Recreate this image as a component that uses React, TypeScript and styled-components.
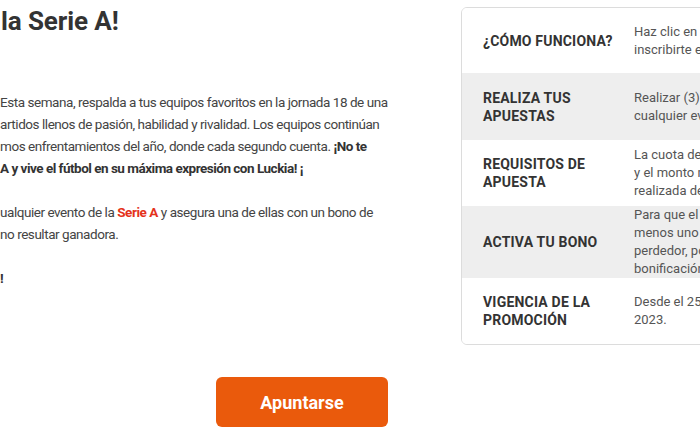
import React from "react";
import styled, { createGlobalStyle } from "styled-components";

const Global = createGlobalStyle`
  html, body { margin: 0; padding: 0; background: #ffffff; }
  body { font-family: Roboto, "Liberation Sans", sans-serif; }
`;

const Viewport = styled.div`
  width: 700px;
  height: 436px;
  overflow: hidden;
  background: #fff;
  display: flex;
  flex-direction: column;
`;

const Top = styled.div`
  display: flex;
  align-items: flex-start;
`;

const LeftCol = styled.div`
  width: 400px;
  flex-shrink: 0;
  padding-top: 5px;
  color: #444;
  font-size: 13.5px;
  letter-spacing: -0.45px;
  line-height: 22px;
`;

const Title = styled.h1`
  margin: 0 0 54px;
  padding-left: 1px;
  font-size: 26px;
  line-height: 32px;
  letter-spacing: -0.1px;
  font-weight: 700;
  color: #333;
  white-space: nowrap;
`;

const Para = styled.p`
  margin: 0 0 22px;
  white-space: nowrap;
`;

const Strong = styled.strong`
  font-weight: 700;
  color: #333;
  letter-spacing: -0.5px;
`;

const Red = styled.strong`
  font-weight: 700;
  color: #e4321b;
`;

const Card = styled.div`
  margin-left: 61px;
  margin-top: 7px;
  width: 330px;
  flex-shrink: 0;
  border: 1px solid #dcdcdc;
  border-radius: 6px;
  overflow: hidden;
  background: #fff;
`;

const Row = styled.div<{ $shade?: boolean; $h: number }>`
  display: flex;
  align-items: center;
  min-height: ${(p) => p.$h}px;
  background: ${(p) => (p.$shade ? "#eeeeee" : "#ffffff")};
`;

const Label = styled.div`
  width: 131px;
  flex-shrink: 0;
  padding: 0 20px 0 21px;
  font-size: 14px;
  letter-spacing: 0.2px;
  line-height: 18px;
  font-weight: 700;
  color: #333;
  text-transform: uppercase;
`;

const Value = styled.div`
  font-size: 13px;
  line-height: 18px;
  color: #555;
  white-space: nowrap;
`;

const ButtonRow = styled.div`
  display: flex;
  padding-left: 216px;
  margin-top: 32px;
`;

const Button = styled.button`
  width: 172px;
  height: 50px;
  border: none;
  border-radius: 6px;
  background: #ea5a0c;
  color: #fff;
  font-family: Roboto, "Liberation Sans", sans-serif;
  font-size: 18px;
  font-weight: 700;
  cursor: pointer;
`;

const rows = [
  { label: "¿Cómo funciona?", h: 65, lines: ["Haz clic en el botón “Apuntarse” para", "inscribirte en la promoción."] },
  { label: "Realiza tus apuestas", h: 67, shade: true, lines: ["Realizar (3) apuestas de 25 MXN o más en", "cualquier evento de la Serie A."] },
  { label: "Requisitos de apuesta", h: 66, lines: ["La cuota de cada apuesta debe ser de 1.50", "y el monto mínimo de 25 MXN, y debe ser", "realizada de forma individual."] },
  { label: "Activa tu bono", h: 72, shade: true, lines: ["Para que el bono se active, al", "menos uno de tus pronósticos debe ser", "perdedor, por lo que recibirás tu", "bonificación en tu cuenta."] },
  { label: "Vigencia de la promoción", h: 66, lines: ["Desde el 25 de diciembre al 31 de diciembre de", "2023."] },
];

export default function App() {
  return (
    <>
      <Global />
      <Viewport>
        <Top>
          <LeftCol>
            <Title>la Serie A!</Title>
            <Para>
              Esta semana, respalda a tus equipos favoritos en la jornada 18 de una
              <br />
              artidos llenos de pasión, habilidad y rivalidad. Los equipos continúan
              <br />
              mos enfrentamientos del año, donde cada segundo cuenta. <Strong>¡No te</Strong>
              <br />
              <Strong>A y vive el fútbol en su máxima expresión con Luckia! ¡</Strong>
            </Para>
            <Para>
              ualquier evento de la <Red>Serie A</Red> y asegura una de ellas con un bono de
              <br />
              no resultar ganadora.
            </Para>
            <Para>
              <Strong>!</Strong>
            </Para>
          </LeftCol>
          <Card>
            {rows.map((r) => (
              <Row key={r.label} $shade={r.shade} $h={r.h}>
                <Label>{r.label}</Label>
                <Value>
                  {r.lines.map((l, i) => (
                    <React.Fragment key={i}>
                      {i > 0 && <br />}
                      {l}
                    </React.Fragment>
                  ))}
                </Value>
              </Row>
            ))}
          </Card>
        </Top>
        <ButtonRow>
          <Button>Apuntarse</Button>
        </ButtonRow>
      </Viewport>
    </>
  );
}
